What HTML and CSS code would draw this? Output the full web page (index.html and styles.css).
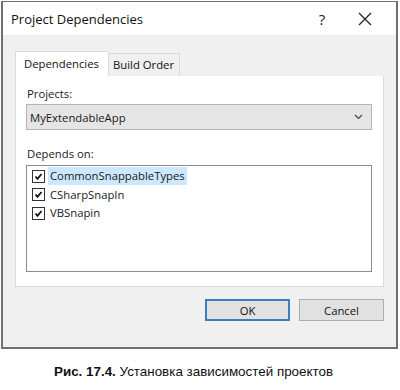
FILE: index.html
```html
<!DOCTYPE html>
<html>
<head>
    <meta charset="UTF-8">
    <title>Project Dependencies</title>
    <link rel="stylesheet" href="styles.css">
</head>
<body>
    <div class="dialog">
        <div class="titlebar">
            <span class="title">Project Dependencies</span>
            <span class="help">?</span>
            <span class="close">
                <svg width="14" height="14" viewBox="0 0 14 14"><path d="M1 1 L13 13 M13 1 L1 13" stroke="#222" stroke-width="1.3" fill="none"/></svg>
            </span>
        </div>
        <div class="client">
            <div class="tabs">
                <div class="tab active">Dependencies</div>
                <div class="tab">Build Order</div>
            </div>
            <div class="panel">
                <div class="label">Projects:</div>
                <div class="combo">
                    <span>MyExtendableApp</span>
                    <svg width="9" height="6" viewBox="0 0 9 6"><path d="M1 1 L4.5 4.5 L8 1" stroke="#444" stroke-width="1.2" fill="none"/></svg>
                </div>
                <div class="label depends">Depends on:</div>
                <div class="listbox">
                    <div class="item">
                        <span class="check"><svg width="11" height="11" viewBox="0 0 11 11"><path d="M2.5 5.5 L4.5 7.8 L8.5 3" stroke="#111" stroke-width="1.8" fill="none"/></svg></span>
                        <span class="text selected">CommonSnappableTypes</span>
                    </div>
                    <div class="item">
                        <span class="check"><svg width="11" height="11" viewBox="0 0 11 11"><path d="M2.5 5.5 L4.5 7.8 L8.5 3" stroke="#111" stroke-width="1.8" fill="none"/></svg></span>
                        <span class="text">CSharpSnapIn</span>
                    </div>
                    <div class="item">
                        <span class="check"><svg width="11" height="11" viewBox="0 0 11 11"><path d="M2.5 5.5 L4.5 7.8 L8.5 3" stroke="#111" stroke-width="1.8" fill="none"/></svg></span>
                        <span class="text">VBSnapin</span>
                    </div>
                </div>
            </div>
            <div class="buttons">
                <button class="btn default">OK</button>
                <button class="btn">Cancel</button>
            </div>
        </div>
    </div>
    <div class="caption"><b>Рис. 17.4.</b> Установка зависимостей проектов</div>
</body>
</html>
```

FILE: styles.css
```css
* {
    margin: 0;
    padding: 0;
    box-sizing: border-box;
}
body {
    background: #fff;
    font-family: "Open Sans", "Noto Sans", sans-serif;
    color: #1a1a1a;
}
.dialog {
    margin: 1px 2px 0 1px;
    width: 397px;
    height: 348px;
    border: 1px solid #6f6f6f;
    border-left-width: 2px;
    border-right-width: 2px;
    border-bottom-width: 2px;
    display: flex;
    flex-direction: column;
}
.titlebar {
    height: 33px;
    background: #fff;
    display: flex;
    align-items: center;
    padding-left: 8px;
}
.title {
    font-size: 13px;
    flex: 1;
    color: #111;
}
.help {
    font-size: 15px;
    width: 44px;
    text-align: center;
    color: #222;
}
.close {
    width: 52px;
    display: flex;
    justify-content: center;
    padding-right: 10px;
}
.client {
    flex: 1;
    background: #f0f0f0;
    padding: 16px 12px 0 12px;
}
.tabs {
    display: flex;
    align-items: flex-end;
    height: 25px;
}
.tab {
    font-size: 11.3px;
    padding: 0 4px;
    width: 72px;
    height: 23px;
    line-height: 22px;
    background: #f0f0f0;
    border: 1px solid #d9d9d9;
    border-bottom: none;
    color: #111;
}
.tab.active {
    height: 25px;
    line-height: 24px;
    background: #fff;
    padding: 0 8px;
    width: 93px;
    border-color: #d9d9d9;
    border-right: none;
}
.panel {
    background: #fff;
    border: 1px solid #d9d9d9;
    border-top: none;
    height: 211px;
    padding: 9px 11px 0 10px;
}
.label {
    font-size: 11.3px;
    line-height: 17px;
    padding-left: 1px;
}
.combo {
    margin-top: 2px;
    height: 26px;
    background: #e5e5e5;
    border: 1px solid #b4b4b4;
    display: flex;
    align-items: center;
    justify-content: space-between;
    padding: 0 8px 0 3px;
    font-size: 11.3px;
}
.label.depends {
    margin-top: 15px;
}
.listbox {
    margin-top: 3px;
    height: 107px;
    border: 1px solid #8c8c8c;
    background: #fff;
    padding-top: 1px;
}
.item {
    display: flex;
    align-items: center;
    height: 18.5px;
    padding-left: 5px;
    font-size: 11.3px;
}
.check {
    width: 13px;
    height: 13px;
    border: 1px solid #333;
    background: #fff;
    display: flex;
    align-items: center;
    justify-content: center;
    margin-right: 3px;
}
.text {
    padding: 0 2px;
    line-height: 18px;
}
.text.selected {
    background: #cce8ff;
}
.buttons {
    display: flex;
    justify-content: flex-end;
    gap: 9px;
    margin-top: 12px;
}
.btn {
    width: 85px;
    height: 22px;
    background: #e1e1e1;
    border: 1px solid #adadad;
    font-family: "Open Sans", "Noto Sans", sans-serif;
    font-size: 11.3px;
    color: #111;
}
.btn.default {
    border: 2px solid #3c7fc0;
}
.caption {
    text-align: center;
    margin-top: 15px;
    padding-right: 13px;
    font-family: "Liberation Sans", Arial, sans-serif;
    font-size: 13.4px;
    color: #111;
}
```
